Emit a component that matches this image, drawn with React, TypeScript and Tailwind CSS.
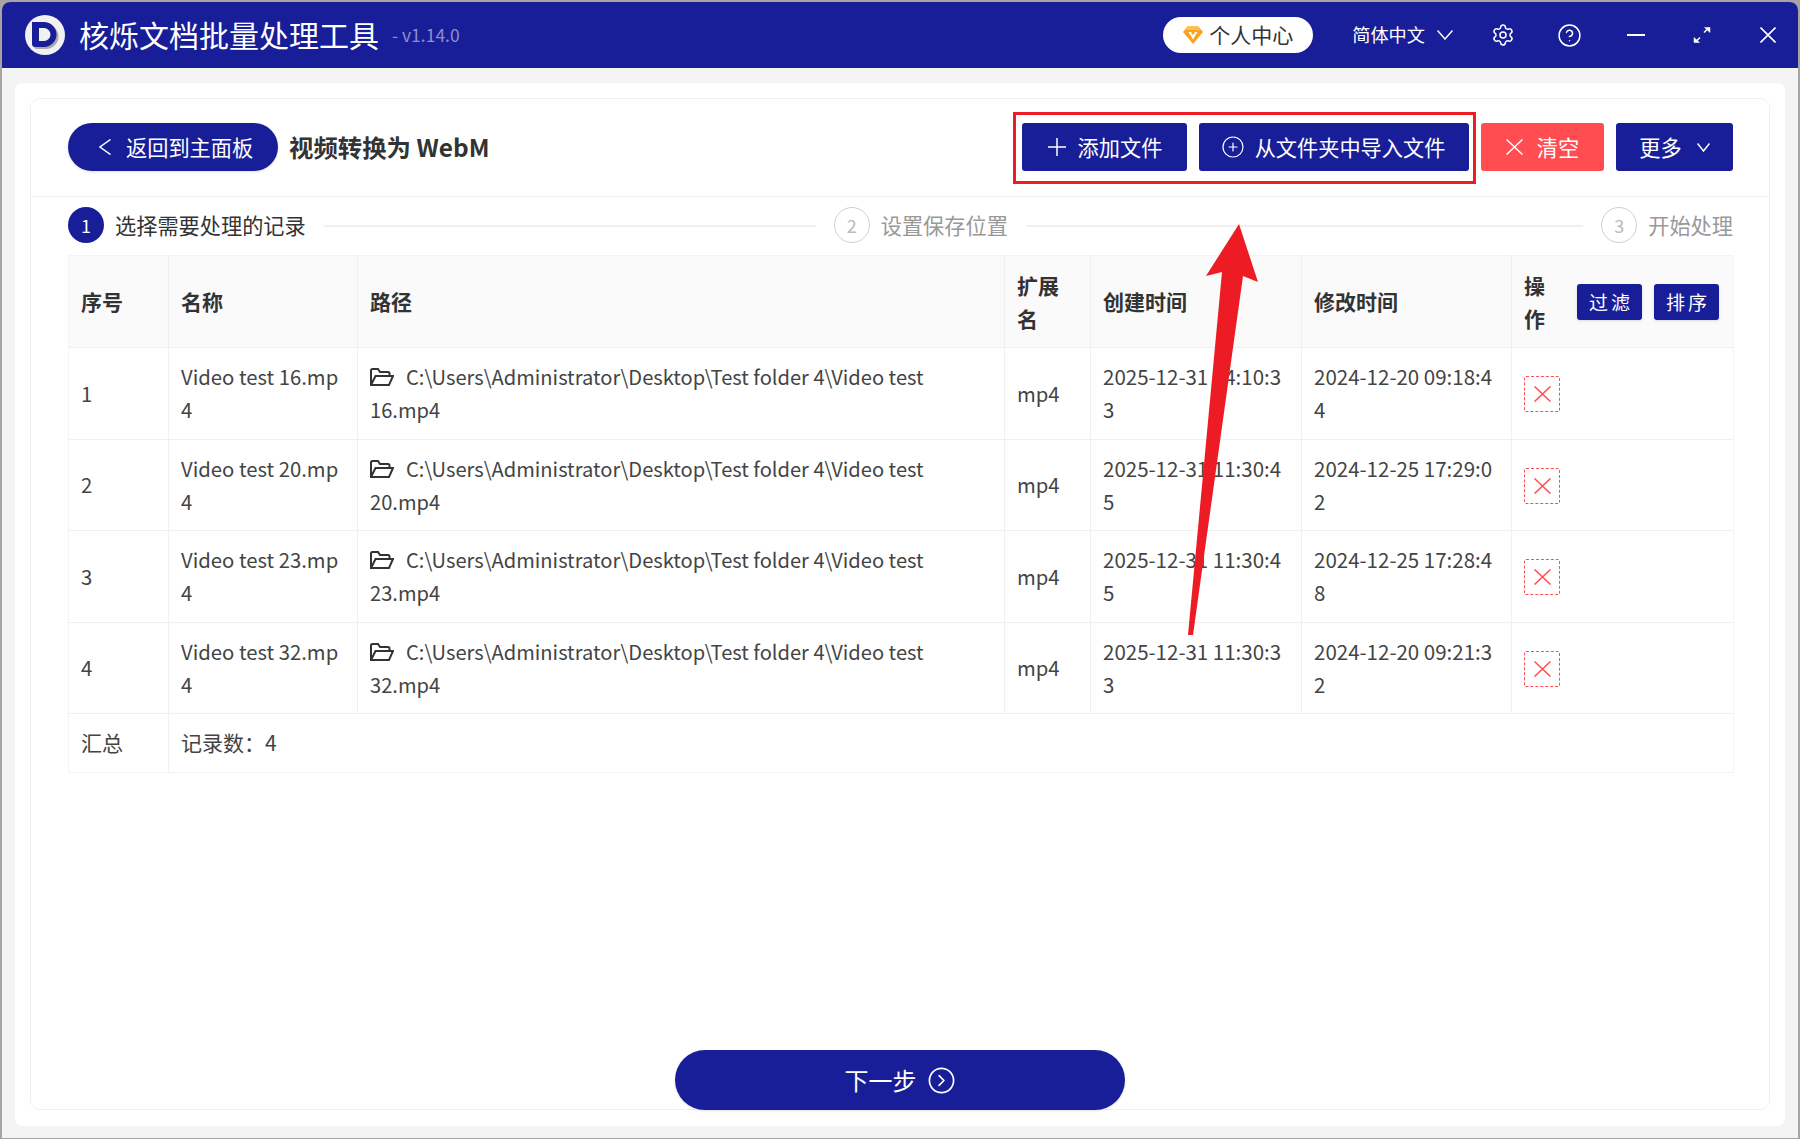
import React from 'react';
import { Settings, CircleHelp, CirclePlus, CircleChevronRight } from 'lucide-react';

const rows = [
  { id: 1, name: 'Video test 16.mp4', file: '16.mp4', created: '2025-12-31 14:10:33', modified: '2024-12-20 09:18:44' },
  { id: 2, name: 'Video test 20.mp4', file: '20.mp4', created: '2025-12-31 11:30:45', modified: '2024-12-25 17:29:02' },
  { id: 3, name: 'Video test 23.mp4', file: '23.mp4', created: '2025-12-31 11:30:45', modified: '2024-12-25 17:28:48' },
  { id: 4, name: 'Video test 32.mp4', file: '32.mp4', created: '2025-12-31 11:30:33', modified: '2024-12-20 09:21:32' },
];

const th = 'border-r border-[#f0f0f0] px-3 text-left align-middle font-bold text-[#333]';
const td = 'border-r border-[#f0f0f0] px-3 align-middle break-all';

function Logo() {
  return (
    <div className="flex h-10 w-10 items-center justify-center rounded-full bg-[#f1f1f1]">
      <svg width="30" height="30" viewBox="0 0 30 30">
        <path d="M4 4h12a12.500 12.500 0 0 1 0 25H7a3 3 0 0 1-3-3z" fill="#a8a8a8" />
        <path d="M2 2h12a12.500 12.500 0 0 1 0 25H5a3 3 0 0 1-3-3z" fill="#181e98" />
        <path d="M9 8h5a6.500 6.500 0 0 1 0 13H9z" fill="#f1f1f1" />
      </svg>
    </div>
  );
}

function Gem() {
  return (
    <svg width="20" height="20" viewBox="0 0 20 20">
      <path d="M5 1h10l5 6-10 12L0 7z" fill="#f9a31f" />
      <path d="M5 1h10l2 4H3z" fill="#fcc04c" />
      <path d="M5.500 7h2.700l1.800 3.500L11.800 7h2.700L10 14.500z" fill="#fff" />
    </svg>
  );
}

// thin line icons, the package's ones have other proportions
function Cross({ w, h, sw = 1.5, cls }: { w: number; h: number; sw?: number; cls?: string }) {
  return (
    <svg width={w} height={h} viewBox={`0 0 ${w} ${h}`} className={cls} fill="none" stroke="currentColor" strokeWidth={sw}>
      <path d={`M0.500 0.500L${w - 0.5} ${h - 0.5}M${w - 0.5} 0.500L0.500 ${h - 0.5}`} />
    </svg>
  );
}

function Chevron({ w, h, sw = 1.5, cls }: { w: number; h: number; sw?: number; cls?: string }) {
  return (
    <svg width={w} height={h} viewBox={`0 0 ${w} ${h}`} className={cls} fill="none" stroke="currentColor" strokeWidth={sw}>
      <path d={`M0.500 0.500L${w / 2} ${h - 1}L${w - 0.5} 0.500`} />
    </svg>
  );
}

function PlusThin() {
  return (
    <svg width="18" height="18" viewBox="0 0 18 18" fill="none" stroke="currentColor" strokeWidth="1.5">
      <path d="M9 0V18M0 9H18" />
    </svg>
  );
}

function Expand() {
  return (
    <svg width="18" height="16" viewBox="0 0 18 16" className="fill-white" stroke="white" strokeWidth="1.500">
      <path d="M11 5.500L14 2.500M7 10.500L4 13.500" />
      <path d="M11.500 0.500H17V5.500z" strokeWidth="0.500" />
      <path d="M6.500 15.500H1V10.500z" strokeWidth="0.500" />
    </svg>
  );
}

function Folder() {
  return (
    <svg width="24" height="18" viewBox="0 0 24 18" fill="none" stroke="#333" strokeWidth="2" className="mr-[12px] inline-block align-[-1px]">
      <path d="M1 17V2.500C1 1.700 1.700 1 2.500 1H8l2 3h8c.8 0 1.500.700 1.500 1.500V7" />
      <path d="M1 17H19L23 8H5.500z" />
    </svg>
  );
}

function Step({ n, label, active }: { n: number; label: string; active?: boolean }) {
  return (
    <div className="flex items-center gap-[11px]">
      <div className={active
        ? 'flex h-9 w-9 items-center justify-center rounded-full bg-[#181e98] text-[18px] text-white'
        : 'flex h-9 w-9 items-center justify-center rounded-full border border-[#cfcfcf] text-[18px] text-[#bbb]'}>
        {n}
      </div>
      <span className={active ? 'text-[21.200px] text-[#333]' : 'text-[21.200px] text-[#999]'}>{label}</span>
    </div>
  );
}

export default function App() {
  return (
    <div className="relative h-[1139px] w-[1800px] overflow-hidden bg-[#a9a4a3] pl-[2px] pr-[2px] pt-[2px] font-['Noto_Sans_CJK_SC','Noto_Sans',sans-serif] text-[#444]">
      <div className="flex h-[1136px] flex-col overflow-hidden rounded-t-[8px] bg-[#f4f4f4]">
        {/* title bar */}
        <div className="flex h-[66px] shrink-0 items-center bg-[#181e98] pl-[23px] text-white">
          <Logo />
          <span className="mb-[2px] ml-[14px] text-[30px] leading-none">核烁文档批量处理工具</span>
          <span className="ml-[13px] mt-[1px] text-[17.500px] text-[#8d90c8]">- v1.14.0</span>
          <div className="ml-auto flex h-9 w-[150px] items-center justify-center gap-[6px] rounded-full bg-white text-[21px] text-[#333]">
            <Gem />
            <span>个人中心</span>
          </div>
          <span className="ml-[39px] text-[18.200px]">简体中文</span>
          <Chevron w={16} h={10} cls="ml-[12px]" />
          <Settings className="ml-[38px] h-6 w-6" strokeWidth={1.5} />
          <CircleHelp className="ml-[42px] h-[25px] w-[25px]" strokeWidth={1.4} />
          <div className="ml-[45px] h-[2px] w-[18px] bg-white" />
          <div className="ml-[48px]"><Expand /></div>
          <Cross w={16} h={16} sw={1.6} cls="ml-[49px] mr-[22px]" />
        </div>

        {/* content */}
        <div className="flex min-h-0 flex-1 flex-col pb-[12px] pl-[13px] pr-[13px] pt-[15px]">
          <div className="flex flex-1 flex-col rounded-[8px] bg-white px-[15px] pb-[16px] pt-[15px]">
            <div className="flex flex-1 flex-col rounded-[10px] border border-[#f0f0f0]">
              <div className="flex h-[98px] shrink-0 items-center border-b border-[#f0f0f0] pb-[1px] pl-[37px] pr-[36px]">
                <button className="flex h-12 w-[210px] items-center rounded-full bg-[#181e98] pl-[29px] text-[21.200px] text-white shadow-sm">
                  <Chevron w={16} h={12} cls="rotate-90" />
                  <span className="ml-[13px]">返回到主面板</span>
                </button>
                <h1 className="ml-[11px] text-[24.400px] font-bold text-[#333]">视频转换为 WebM</h1>
                <div className="ml-auto flex items-center gap-3">
                  <button className="flex h-12 w-[165px] items-center justify-center gap-[12px] rounded-[3px] bg-[#181e98] pl-[1px] text-[21.200px] text-white">
                    <PlusThin />
                    <span>添加文件</span>
                  </button>
                  <button className="flex h-12 w-[270px] items-center justify-center gap-[10px] rounded-[3px] bg-[#181e98] text-[21.200px] text-white">
                    <CirclePlus className="-ml-[2px] h-6 w-6" strokeWidth={1.2} />
                    <span>从文件夹中导入文件</span>
                  </button>
                  <button className="flex h-12 w-[123px] items-center justify-center gap-[14px] rounded-[3px] bg-[#ff4d52] text-[21.200px] text-white">
                    <Cross w={17} h={16} />
                    <span>清空</span>
                  </button>
                  <button className="flex h-12 w-[117px] items-center justify-center gap-[15px] rounded-[3px] bg-[#181e98] text-[21.200px] text-white">
                    <span>更多</span>
                    <Chevron w={13} h={9} />
                  </button>
                </div>
              </div>

              <div className="flex h-[58px] shrink-0 items-center gap-[18px] pb-[2px] pl-[37px] pr-[36px]">
                <Step n={1} label="选择需要处理的记录" active />
                <div className="mt-[2px] h-[2px] w-[492px] bg-[#f0f0f0]" />
                <Step n={2} label="设置保存位置" />
                <div className="mt-[2px] h-[2px] flex-1 bg-[#f0f0f0]" />
                <Step n={3} label="开始处理" />
              </div>

              <div className="pl-[37px] pr-[36px]">
                <table className="w-[1665px] table-fixed border-collapse border border-[#f4f4f4] text-[20.300px] leading-[33px]">
                  <colgroup>
                    <col className="w-[100px]" />
                    <col className="w-[189px]" />
                    <col className="w-[647px]" />
                    <col className="w-[86px]" />
                    <col className="w-[211px]" />
                    <col className="w-[210px]" />
                    <col className="w-[222px]" />
                  </colgroup>
                  <thead>
                    <tr className="h-[92px] border-b border-[#f0f0f0] bg-[#fafafa] text-[21px]">
                      <th className={th}>序号</th>
                      <th className={th}>名称</th>
                      <th className={th}>路径</th>
                      <th className={th}>扩展名</th>
                      <th className={th}>创建时间</th>
                      <th className={th}>修改时间</th>
                      <th className="pl-3 pr-[14px] text-left font-bold text-[#333]">
                        <div className="flex items-center justify-between">
                          <span className="w-[21px]">操作</span>
                          <div className="flex gap-3">
                            <button className="h-9 w-[65px] rounded-[3px] bg-[#181e98] pl-[3px] text-[19px] font-normal tracking-[3px] text-white shadow-sm">过滤</button>
                            <button className="h-9 w-[65px] rounded-[3px] bg-[#181e98] pl-[3px] text-[19px] font-normal tracking-[3px] text-white shadow-sm">排序</button>
                          </div>
                        </div>
                      </th>
                    </tr>
                  </thead>
                  <tbody>
                    {rows.map((r) => (
                      <tr key={r.id} className="h-[91.500px] border-b border-[#f0f0f0]">
                        <td className={td}>{r.id}</td>
                        <td className={td}>{r.name}</td>
                        <td className={td + ' text-[20.100px]'}>
                          <Folder />
                          C:\Users\Administrator\Desktop\Test folder 4\Video test
                          <br />
                          {r.file}
                        </td>
                        <td className={td}>mp4</td>
                        <td className={td + ' text-[20.500px]'}>{r.created}</td>
                        <td className={td + ' text-[20.500px]'}>{r.modified}</td>
                        <td className="px-3 align-middle">
                          <div className="mt-[2px] flex h-9 w-9 items-center justify-center rounded-[2px] border border-dashed border-[#ff4d52] text-[#ff4d52]">
                            <Cross w={17} h={16} />
                          </div>
                        </td>
                      </tr>
                    ))}
                    <tr className="h-[59px]">
                      <td className={td + ' pb-[2px] text-[21px]'}>汇总</td>
                      <td colSpan={6} className="px-3 pb-[2px] text-[21px]">记录数：4</td>
                    </tr>
                  </tbody>
                </table>
              </div>

              <div className="-mb-[1px] mt-auto flex justify-center">
                <button className="flex h-[60px] w-[450px] items-center justify-center gap-[10px] rounded-full bg-[#181e98] text-[24px] text-white shadow-sm">
                  <span>下一步</span>
                  <CircleChevronRight className="h-[29px] w-[29px]" strokeWidth={1.4} />
                </button>
              </div>
            </div>
          </div>
        </div>
      </div>

      {/* annotation drawn over the screenshot */}
      <div className="pointer-events-none absolute left-[1013px] top-[112px] h-[72px] w-[463px] border-[3px] border-[#ed1c24]" />
      <svg className="pointer-events-none absolute left-0 top-0" width="1800" height="1139">
        <path d="M1239 224L1258 282L1243 276L1193 635L1188 635L1222 272L1206 276Z" fill="#ed1c24" />
      </svg>
    </div>
  );
}
